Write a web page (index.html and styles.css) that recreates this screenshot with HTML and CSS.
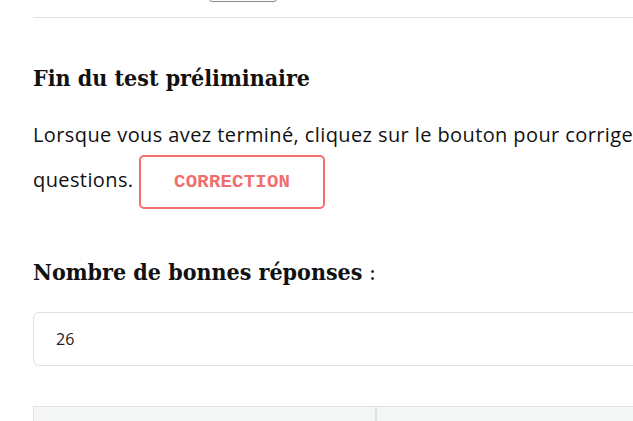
FILE: index.html
```html
<!DOCTYPE html>
<html lang="fr">
<head>
<meta charset="utf-8">
<title>Fin du test préliminaire</title>
<link rel="stylesheet" href="styles.css">
</head>
<body>
<div class="page">
  <div class="top-row"><span class="top-btn"></span></div>
  <hr class="rule">
  <h2 class="title">Fin du test préliminaire</h2>
  <p class="text">Lorsque vous avez terminé, cliquez sur le bouton pour corriger les questions. <button class="btn-correct" type="button">CORRECTION</button></p>
  <h2 class="title title-2">Nombre de bonnes réponses<span class="colon"> :</span></h2>
  <div class="field">26</div>
  <div class="grid">
    <div class="cell"></div>
    <div class="cell"></div>
  </div>
</div>
</body>
</html>
```

FILE: styles.css
```css
html, body {
  margin: 0;
  padding: 0;
  overflow: hidden;
  background: #ffffff;
}

body {
  font-family: "Open Sans", "DejaVu Sans", sans-serif;
  color: #111111;
}

.page {
  width: 700px;
  margin-left: 33px;
}

.top-row {
  height: 2px;
  padding-left: 176px;
  display: flex;
  align-items: flex-end;
}

.top-btn {
  display: block;
  width: 68px;
  height: 12px;
  flex: none;
  border: 1px solid #8a8a8a;
  border-radius: 3px;
  box-sizing: border-box;
}

.rule {
  margin: 15px 0 0 0;
  border: 0;
  border-top: 1px solid #e2e2e2;
  width: 720px;
}

.title {
  font-family: "DejaVu Serif Condensed", "DejaVu Serif", serif;
  font-stretch: condensed;
  font-weight: bold;
  font-size: 23px;
  line-height: 30px;
  margin: 45px 0 0 0;
  color: #111111;
}

.colon {
  font-weight: normal;
}

.text {
  font-size: 20px;
  letter-spacing: 0.4px;
  line-height: 40px;
  margin: 22px 0 0 0;
}

.btn-correct {
  display: inline-block;
  width: 186px;
  height: 54px;
  box-sizing: border-box;
  border: 2px solid #f26d6d;
  border-radius: 5px;
  background: #ffffff;
  color: #f26d6d;
  font-family: "Liberation Mono", "DejaVu Sans Mono", monospace;
  font-size: 19px;
  font-weight: bold;
  letter-spacing: 0.2px;
  padding: 0;
  vertical-align: baseline;
}

.title-2 {
  margin-top: 48px;
}

.field {
  margin-top: 25px;
  height: 54px;
  box-sizing: border-box;
  border: 1px solid #e0e0e0;
  border-radius: 6px;
  padding: 0 22px;
  display: flex;
  align-items: center;
  font-size: 16px;
  color: #222222;
}

.grid {
  margin-top: 40px;
  display: grid;
  grid-template-columns: 341px 1fr;
  border: 1px solid #dde2e0;
  background: #f5f7f6;
  height: 60px;
}

.cell + .cell {
  border-left: 2px solid #dde2e0;
}
```
